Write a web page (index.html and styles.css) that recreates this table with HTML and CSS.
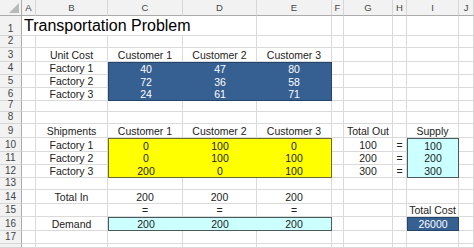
FILE: index.html
```html
<!DOCTYPE html>
<html>
<head>
<meta charset="utf-8">
<link rel="stylesheet" href="styles.css">
</head>
<body>
<div class="sheet">
  <!-- ranges with fill (explicitly placed) -->
  <div class="range blue r-cost3">
    <div class="v">40</div><div class="v">47</div><div class="v">80</div>
    <div class="v">72</div><div class="v">36</div><div class="v">58</div>
    <div class="v">24</div><div class="v">61</div><div class="v">71</div>
  </div>
  <div class="range yellow r-ship">
    <div class="v">0</div><div class="v">100</div><div class="v">0</div>
    <div class="v">0</div><div class="v">100</div><div class="v">100</div>
    <div class="v">200</div><div class="v">0</div><div class="v">100</div>
  </div>
  <div class="range cyan r-supply">
    <div class="v">100</div><div class="v">200</div><div class="v">300</div>
  </div>
  <div class="range cyan r-demand">
    <div class="v">200</div><div class="v">200</div><div class="v">200</div>
  </div>
  <div class="range blue r-total">
    <div class="v">26000</div>
  </div>

  <!-- header row -->
  <div class="corner"></div>
  <div class="h">A</div><div class="h">B</div><div class="h">C</div><div class="h">D</div><div class="h">E</div>
  <div class="h">F</div><div class="h">G</div><div class="h">H</div><div class="h">I</div><div class="h">J</div>

  <!-- row 1 -->
  <div class="rh">1</div>
  <div class="c title">Transportation Problem</div>
  <div class="c"></div><div class="c"></div><div class="c"></div><div class="c"></div><div class="c"></div><div class="c"></div>

  <!-- row 2 -->
  <div class="rh">2</div>
  <div class="c"></div><div class="c"></div><div class="c"></div><div class="c"></div><div class="c"></div>
  <div class="c"></div><div class="c"></div><div class="c"></div><div class="c"></div><div class="c"></div>

  <!-- row 3 -->
  <div class="rh">3</div>
  <div class="c"></div><div class="c">Unit Cost</div><div class="c">Customer 1</div><div class="c">Customer 2</div><div class="c">Customer 3</div>
  <div class="c"></div><div class="c"></div><div class="c"></div><div class="c"></div><div class="c"></div>

  <!-- row 4 -->
  <div class="rh">4</div>
  <div class="c"></div><div class="c">Factory 1</div>
  <div class="c"></div><div class="c"></div><div class="c"></div><div class="c"></div><div class="c"></div>

  <!-- row 5 -->
  <div class="rh">5</div>
  <div class="c"></div><div class="c">Factory 2</div>
  <div class="c"></div><div class="c"></div><div class="c"></div><div class="c"></div><div class="c"></div>

  <!-- row 6 -->
  <div class="rh">6</div>
  <div class="c"></div><div class="c">Factory 3</div>
  <div class="c"></div><div class="c"></div><div class="c"></div><div class="c"></div><div class="c"></div>

  <!-- row 7 -->
  <div class="rh">7</div>
  <div class="c"></div><div class="c"></div><div class="c"></div><div class="c"></div><div class="c"></div>
  <div class="c"></div><div class="c"></div><div class="c"></div><div class="c"></div><div class="c"></div>

  <!-- row 8 -->
  <div class="rh">8</div>
  <div class="c"></div><div class="c"></div><div class="c"></div><div class="c"></div><div class="c"></div>
  <div class="c"></div><div class="c"></div><div class="c"></div><div class="c"></div><div class="c"></div>

  <!-- row 9 -->
  <div class="rh">9</div>
  <div class="c"></div><div class="c">Shipments</div><div class="c">Customer 1</div><div class="c">Customer 2</div><div class="c">Customer 3</div>
  <div class="c"></div><div class="c">Total Out</div><div class="c"></div><div class="c">Supply</div><div class="c"></div>

  <!-- row 10 -->
  <div class="rh">10</div>
  <div class="c"></div><div class="c">Factory 1</div>
  <div class="c"></div><div class="c">100</div><div class="c">=</div><div class="c"></div>

  <!-- row 11 -->
  <div class="rh">11</div>
  <div class="c"></div><div class="c">Factory 2</div>
  <div class="c"></div><div class="c">200</div><div class="c">=</div><div class="c"></div>

  <!-- row 12 -->
  <div class="rh">12</div>
  <div class="c"></div><div class="c">Factory 3</div>
  <div class="c"></div><div class="c">300</div><div class="c">=</div><div class="c"></div>

  <!-- row 13 -->
  <div class="rh">13</div>
  <div class="c"></div><div class="c"></div><div class="c"></div><div class="c"></div><div class="c"></div>
  <div class="c"></div><div class="c"></div><div class="c"></div><div class="c"></div><div class="c"></div>

  <!-- row 14 -->
  <div class="rh">14</div>
  <div class="c"></div><div class="c">Total In</div><div class="c">200</div><div class="c">200</div><div class="c">200</div>
  <div class="c"></div><div class="c"></div><div class="c"></div><div class="c"></div><div class="c"></div>

  <!-- row 15 -->
  <div class="rh">15</div>
  <div class="c"></div><div class="c"></div><div class="c">=</div><div class="c">=</div><div class="c">=</div>
  <div class="c"></div><div class="c"></div><div class="c"></div><div class="c">Total Cost</div><div class="c"></div>

  <!-- row 16 -->
  <div class="rh">16</div>
  <div class="c"></div><div class="c">Demand</div>
  <div class="c"></div><div class="c"></div><div class="c"></div><div class="c"></div>

  <!-- row 17 -->
  <div class="rh">17</div>
  <div class="c"></div><div class="c"></div><div class="c"></div><div class="c"></div><div class="c"></div>
  <div class="c"></div><div class="c"></div><div class="c"></div><div class="c"></div><div class="c"></div>

  <!-- row 18 (only its top sliver is visible) -->
  <div class="rh"></div>
  <div class="c"></div><div class="c"></div><div class="c"></div><div class="c"></div><div class="c"></div>
  <div class="c"></div><div class="c"></div><div class="c"></div><div class="c"></div><div class="c"></div>
</div>
</body>
</html>
```
FILE: styles.css
```css
* { box-sizing: border-box; }
html, body { margin: 0; padding: 0; background: #fff; }

.sheet {
  display: grid;
  grid-template-columns: 22px 14px 72px 75px 74px 75px 12px 49px 14px 52px 1fr;
  grid-template-rows: 16px 20px 12px 14px 13px 13px 13px 11px 12px 14px 14px 13px 13px 12px 14px 13px 14px 13px 4px;
  width: 474px;
  height: 248px;
  overflow: hidden;
  font-family: "Liberation Sans", Arial, sans-serif;
  font-size: 10.5px;
  color: #222;
}

.corner {
  background: #f2f2f2;
  border-right: 1px solid #ababab;
  border-bottom: 1px solid #ababab;
  display: flex;
  align-items: flex-end;
  justify-content: flex-end;
  padding: 0 2px 2px 0;
}
.corner::after {
  content: "";
  width: 0;
  height: 0;
  border-left: 10px solid transparent;
  border-bottom: 10px solid #b9b9b9;
}

.h {
  background: #f2f2f2;
  border-right: 1px solid #d6d6d6;
  border-bottom: 1px solid #ababab;
  color: #444;
  font-size: 9.5px;
  display: flex;
  align-items: center;
  justify-content: center;
  line-height: 12px;
}

.rh {
  background: #f2f2f2;
  border-right: 1px solid #ababab;
  border-bottom: 1px solid #d6d6d6;
  color: #444;
  font-size: 10px;
  display: flex;
  align-items: flex-end;
  justify-content: center;
  line-height: 10px;
  padding-bottom: 1px;
}

.c {
  border-right: 1px solid #dadada;
  border-bottom: 1px solid #dadada;
  display: flex;
  align-items: flex-end;
  justify-content: center;
  line-height: 12px;
  white-space: nowrap;
}

.title {
  grid-column: span 4;
  justify-content: flex-start;
  padding-left: 2px;
  font-size: 16px;
  line-height: 18px;
  color: #000;
}

.range {
  display: grid;
  grid-auto-rows: 1fr;
  border: 1px solid #444;
  z-index: 1;
}
.r-cost3, .r-ship, .r-demand { grid-template-columns: repeat(3, 1fr); }
.r-cost3 { grid-column: 4 / 7; grid-row: 5 / 8; }
.r-ship { grid-column: 4 / 7; grid-row: 11 / 14; }
.r-supply { grid-column: 10 / 11; grid-row: 11 / 14; }
.r-demand { grid-column: 4 / 7; grid-row: 17 / 18; }
.r-total { grid-column: 10 / 11; grid-row: 17 / 18; }

.blue { background: #366092; color: #fff; border-color: #24456b; }
.yellow { background: #ffff00; border-color: #6b6a30; }
.cyan { background: #ccffff; border-color: #4a5a5a; }

.v {
  display: flex;
  align-items: flex-end;
  justify-content: center;
  line-height: 12px;
  white-space: nowrap;
}
```
